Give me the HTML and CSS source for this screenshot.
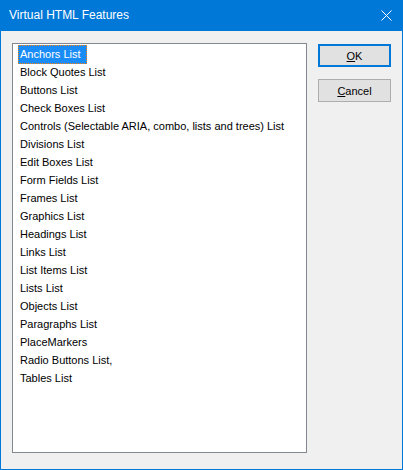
FILE: index.html
```html
<!DOCTYPE html>
<html>
<head>
<meta charset="utf-8">
<link rel="stylesheet" href="styles.css">
</head>
<body>
<div class="window">
  <div class="titlebar">
    <span class="title">Virtual HTML Features</span>
    <svg class="close" width="11" height="11" viewBox="0 0 11 11"><path d="M0.5 0.5 L10.5 10.5 M10.5 0.5 L0.5 10.5" stroke="#fff" stroke-width="1" fill="none"/></svg>
  </div>
  <div class="content">
    <div class="listbox">
      <div class="item"><span class="label selected">Anchors List</span></div>
      <div class="item"><span class="label">Block Quotes List</span></div>
      <div class="item"><span class="label">Buttons List</span></div>
      <div class="item"><span class="label">Check Boxes List</span></div>
      <div class="item"><span class="label">Controls (Selectable ARIA, combo, lists and trees) List</span></div>
      <div class="item"><span class="label">Divisions List</span></div>
      <div class="item"><span class="label">Edit Boxes List</span></div>
      <div class="item"><span class="label">Form Fields List</span></div>
      <div class="item"><span class="label">Frames List</span></div>
      <div class="item"><span class="label">Graphics List</span></div>
      <div class="item"><span class="label">Headings List</span></div>
      <div class="item"><span class="label">Links List</span></div>
      <div class="item"><span class="label">List Items List</span></div>
      <div class="item"><span class="label">Lists List</span></div>
      <div class="item"><span class="label">Objects List</span></div>
      <div class="item"><span class="label">Paragraphs List</span></div>
      <div class="item"><span class="label">PlaceMarkers</span></div>
      <div class="item"><span class="label">Radio Buttons List,</span></div>
      <div class="item"><span class="label">Tables List</span></div>
    </div>
    <div class="buttons">
      <button class="btn default"><u>O</u>K</button>
      <button class="btn"><u>C</u>ancel</button>
    </div>
  </div>
</div>
</body>
</html>
```

FILE: styles.css
```css
html, body {
  margin: 0;
  padding: 0;
  background: #f0f0f0;
}
.window {
  width: 403px;
  height: 470px;
  box-sizing: border-box;
  border: 1px solid #0078d7;
  border-top: none;
  background: #f0f0f0;
  display: flex;
  flex-direction: column;
}
.titlebar {
  height: 31px;
  margin: 0 -1px;
  background: #0078d7;
  display: flex;
  align-items: center;
  justify-content: space-between;
  padding: 0 11px 0 9px;
  color: #fff;
  font-family: "Liberation Sans", Arial, sans-serif;
  font-size: 12px;
  flex-shrink: 0;
}
.title {
  margin-top: -1px;
}
.close {
  display: block;
  margin-top: -1px;
}
.content {
  display: flex;
  padding: 12px 0 0 11px;
  gap: 11px;
}
.listbox {
  width: 295px;
  height: 410px;
  box-sizing: border-box;
  border: 1px solid #828790;
  background: #fff;
  padding: 1px 0 0 5px;
}
.item {
  height: 18px;
  display: flex;
  align-items: center;
  font-family: "Liberation Sans", Arial, sans-serif;
  font-size: 11px;
  color: #000;
}
.label {
  padding: 0 2px;
  line-height: 18px;
  height: 18px;
  box-sizing: border-box;
}
.label.selected {
  padding: 0 6px 0 2px;
  height: 19px;
  line-height: 19px;
  background: #1a8cf5;
  color: #fff;
  outline: 1px dotted #ff7f00;
  outline-offset: -1px;
}
.buttons {
  display: flex;
  flex-direction: column;
  gap: 12px;
  padding-top: 1px;
}
.btn {
  width: 73px;
  height: 23px;
  box-sizing: border-box;
  border: 1px solid #adadad;
  background: #e1e1e1;
  font-family: "Liberation Sans", Arial, sans-serif;
  font-size: 11px;
  color: #000;
  padding: 0;
  margin: 0;
}
.btn.default {
  border: 2px solid #0078d7;
}
```
